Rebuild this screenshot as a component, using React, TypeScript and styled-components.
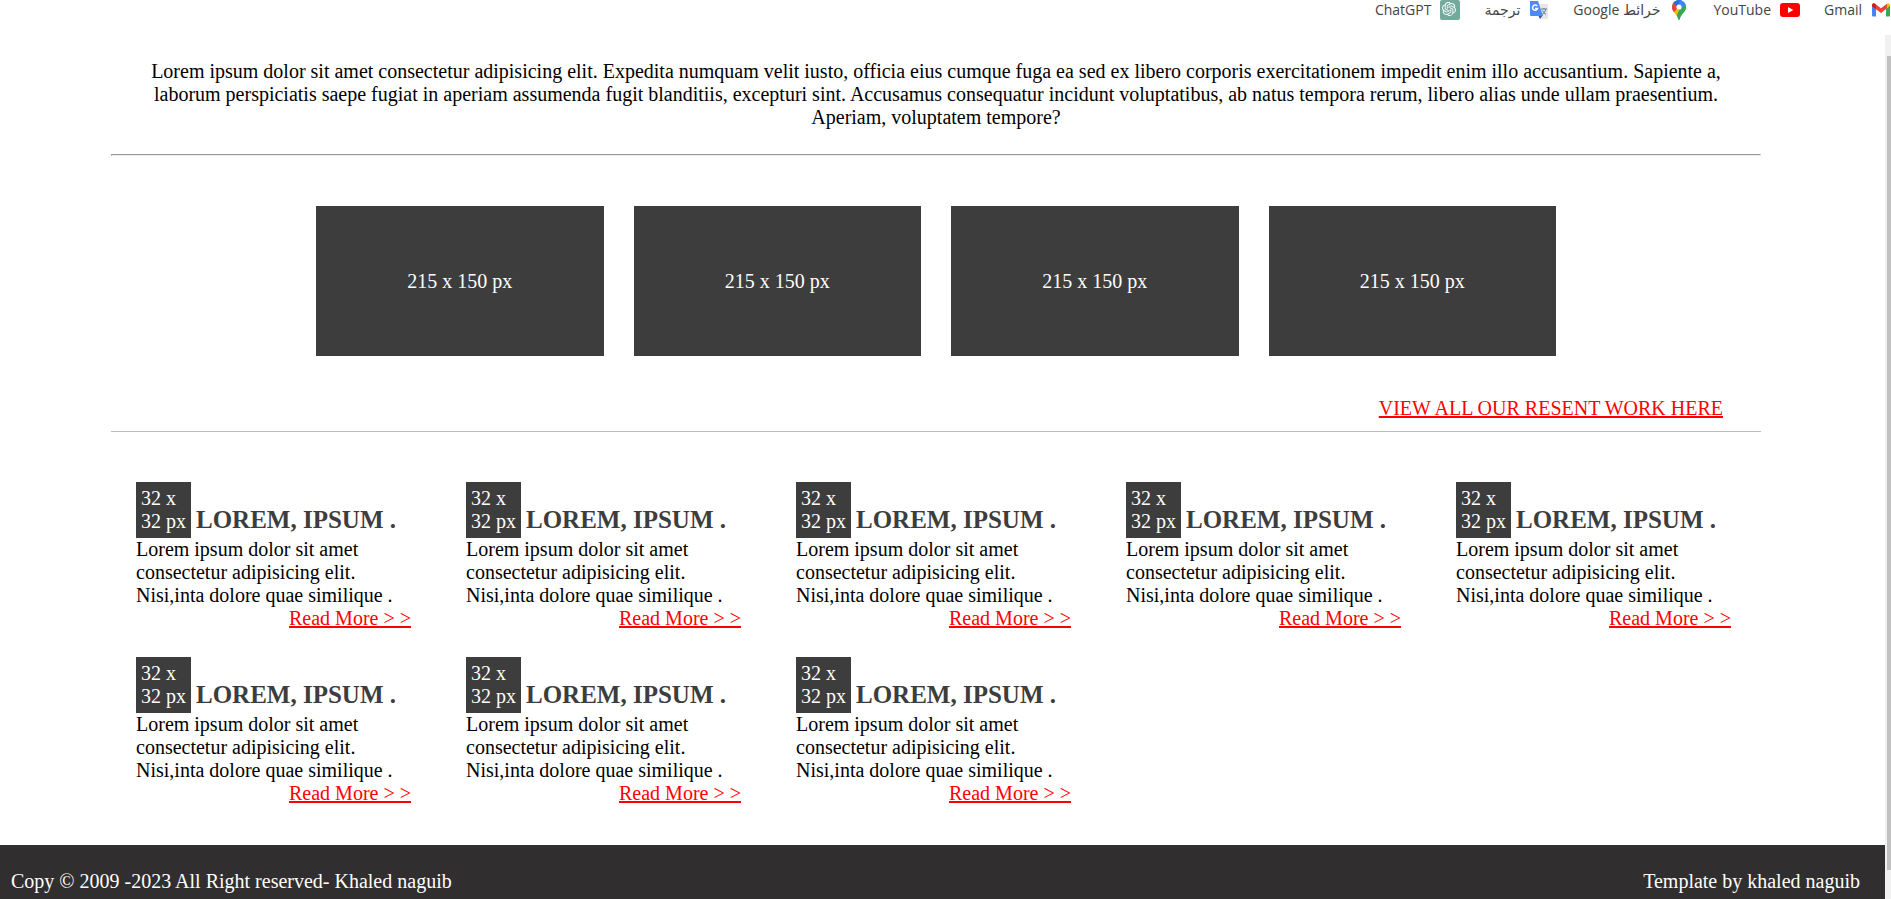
import React from 'react';
import styled, { createGlobalStyle } from 'styled-components';
import { SiOpenai } from 'react-icons/si';

const GlobalStyle = createGlobalStyle`
  *, *::before, *::after { box-sizing: border-box; }
  body {
    margin: 0;
    background: #fff;
    color: #000;
    font: 20px/23px "Liberation Serif", "Times New Roman", serif;
  }
  p, h2, ul { margin: 0; padding: 0; }
`;

const Window = styled.div`
  display: flex;
  flex-direction: column;
  height: 100vh;
  min-height: 640px;
  overflow: hidden;
`;

const BookmarkBar = styled.nav`
  display: flex;
  flex: none;
  gap: 24px;
  height: 35px;
  overflow: hidden;
`;

const Bookmark = styled.a`
  display: flex;
  align-items: center;
  gap: 9px;
  height: 20px;
  color: #444;
  font: 14px/20px "Open Sans", "DejaVu Sans", sans-serif;
  text-decoration: none;
  white-space: nowrap;

  svg { flex: none; }
`;

const Viewport = styled.div`
  display: flex;
  flex: 1;
  min-height: 0;
`;

const Page = styled.div`
  display: flex;
  flex: 1;
  flex-direction: column;
  min-width: 0;
  overflow: hidden;
`;

const ScrollTrack = styled.div`
  flex: none;
  width: 6px;
  padding: 21px 0 29px 2px;
  background: #f1f1f1;
`;

const ScrollThumb = styled.div`
  height: 100%;
  background: #c1c1c1;
`;

const Main = styled.main`
  flex: 1 0 auto;
  margin: 0 124px 0 111px;
  padding: 25px 0 40px;
`;

const Intro = styled.p`
  padding: 0 35px;
  text-align: center;
`;

const Rule = styled.hr`
  height: 2px;
  margin: 25px 0 50px;
  border: 1px solid;
  border-color: #9a9a9a #eee #eee #9a9a9a;
`;

const WorkGrid = styled.div`
  display: grid;
  grid-template-columns: repeat(4, 1fr);
  gap: 30px;
  padding: 0 205px;
`;

const WorkTile = styled.div`
  display: flex;
  align-items: center;
  justify-content: center;
  height: 150px;
  background: #3d3d3d;
  color: #fff;
`;

const WorkFooter = styled.div`
  display: flex;
  justify-content: flex-end;
  margin: 41px 0 50px;
  padding: 0 38px 11px;
  border-bottom: 1px solid #bbb;
`;

const RedLink = styled.a`
  color: #f00;
`;

const CardGrid = styled.div`
  display: grid;
  grid-template-columns: repeat(5, 1fr);
  row-gap: 27px;
`;

const Card = styled.article`
  display: flex;
  flex-direction: column;
  padding: 0 30px 0 25px;

  ${RedLink} { align-self: flex-end; }
`;

const CardHead = styled.div`
  display: flex;
  align-items: last baseline;
  gap: 5px;
`;

const CardIcon = styled.div`
  flex: none;
  width: 55px;
  padding: 5px;
  background: #3d3d3d;
  color: #fff;
`;

const CardTitle = styled.h2`
  color: #3d3d3d;
  font-size: 25px;
  line-height: 23px;
  white-space: nowrap;
`;

const Footer = styled.footer`
  display: flex;
  flex: none;
  justify-content: space-between;
  padding: 25px 25px 25px 11px;
  background: #312e2f;
  color: #fff;
`;

const GmailIcon = () => (
  <svg width="20" height="20" viewBox="0 0 20 20" aria-hidden="true">
    <path d="M1 5v10.500q0 1 1 1h3V9z" fill="#4285f4" />
    <path d="M19 5v10.500q0 1-1 1h-3V9z" fill="#34a853" />
    <path d="M15 4.500 16 3.700q1.500-.8 2.600.2.400.5.400 1.600L15 9z" fill="#fbbc04" />
    <path d="M1 5.500Q1 4 2 3.500q1-.5 2 .2L10 8.200l6-4.500V8.300L10 13 1 6.300z" fill="#ea4335" />
    <path d="M1 5.500Q1 4 2 3.500q1-.5 2 .2l1 .8V9.300L1 6.300z" fill="#c5221f" />
  </svg>
);

const YouTubeIcon = () => (
  <svg width="20" height="20" viewBox="0 0 20 20" aria-hidden="true">
    <rect x="0" y="3" width="20" height="14" rx="3" fill="#f00" />
    <path d="M8 7v6l5.300-3z" fill="#fff" />
  </svg>
);

const MapsIcon = () => (
  <svg width="20" height="20" viewBox="0 0 20 20" aria-hidden="true">
    <clipPath id="pin">
      <path d="M10 0a7 7 0 0 0-7 7c0 5 5 6.500 6.200 12 .2.900 1.400.9 1.600 0C12 13.500 17 12 17 7a7 7 0 0 0-7-7z" />
    </clipPath>
    <g clipPath="url(#pin)">
      <path d="M0 0h20v20H0z" fill="#34a853" />
      <path d="M0 13 10 7l2 3-7 8H0z" fill="#fbbc04" />
      <path d="M0 0h5l5 7-6 6H0z" fill="#ea4335" />
      <path d="M3.500 2 10-1h3l-3 8-2-1z" fill="#1a73e8" />
      <path d="M11-1 18 4l-8 7-1-4z" fill="#4285f4" />
      <path d="M18 3v17H8l1-8z" fill="#34a853" />
    </g>
    <circle cx="10" cy="7" r="2.600" fill="#fff" />
  </svg>
);

const TranslateIcon = () => (
  <svg width="20" height="20" viewBox="0 0 20 20" aria-hidden="true">
    <path d="M7 4h11q1 0 1 1v13q0 1-1 1h-7z" fill="#e4e6e9" />
    <path d="M9 15h5l-3 4z" fill="#3a4fb8" />
    <path d="M1 1h8l5 15H2q-1 0-1-1V1z" fill="#4c8bf5" />
    <path d="M8.200 6.100A2.600 2.600 0 1 0 8.600 8.500H6" fill="none" stroke="#fff" strokeWidth="1.500" />
    <path d="M12 9h6M15 8v1M17 9q-1 4-4 5.500M13.500 10.500q1 2.500 3.500 4" fill="none" stroke="#607d8b" />
  </svg>
);

const ChatIcon = () => (
  <svg width="20" height="20" viewBox="0 0 20 20" aria-hidden="true">
    <rect width="20" height="20" rx="2" fill="#74aa9c" />
    <SiOpenai x="2" y="2" width="16" height="16" color="#fff" />
  </svg>
);

const bookmarks = [
  { label: 'Gmail', Icon: GmailIcon },
  { label: 'YouTube', Icon: YouTubeIcon },
  { label: 'خرائط Google', Icon: MapsIcon },
  { label: 'ترجمة', Icon: TranslateIcon },
  { label: 'ChatGPT', Icon: ChatIcon },
];

const workTiles = [1, 2, 3, 4];
const cards = [1, 2, 3, 4, 5, 6, 7, 8];

export default function App() {
  return (
    <Window>
      <GlobalStyle />
      <BookmarkBar dir="rtl" aria-label="Bookmarks">
        {bookmarks.map(({ label, Icon }) => (
          <Bookmark href="#" key={label}>
            <Icon />
            <span>{label}</span>
          </Bookmark>
        ))}
      </BookmarkBar>
      <Viewport>
        <Page>
          <Main>
            <Intro>
              Lorem ipsum dolor sit amet consectetur adipisicing elit. Expedita numquam velit iusto,
              officia eius cumque fuga ea sed ex libero corporis exercitationem impedit enim illo
              accusantium. Sapiente a, laborum perspiciatis saepe fugiat in aperiam assumenda fugit
              blanditiis, excepturi sint. Accusamus consequatur incidunt voluptatibus, ab natus
              tempora rerum, libero alias unde ullam praesentium. Aperiam, voluptatem tempore?
            </Intro>
            <Rule />
            <WorkGrid>
              {workTiles.map((id) => (
                <WorkTile key={id}>215 x 150 px</WorkTile>
              ))}
            </WorkGrid>
            <WorkFooter>
              <RedLink href="#">VIEW ALL OUR RESENT WORK HERE</RedLink>
            </WorkFooter>
            <CardGrid>
              {cards.map((id) => (
                <Card key={id}>
                  <CardHead>
                    <CardIcon>32 x 32 px</CardIcon>
                    <CardTitle>LOREM, IPSUM .</CardTitle>
                  </CardHead>
                  <p>Lorem ipsum dolor sit amet consectetur adipisicing elit. Nisi,inta dolore quae similique .</p>
                  <RedLink href="#">Read More &gt; &gt;</RedLink>
                </Card>
              ))}
            </CardGrid>
          </Main>
          <Footer>
            <span>Copy © 2009 -2023 All Right reserved- Khaled naguib</span>
            <span>Template by khaled naguib</span>
          </Footer>
        </Page>
        <ScrollTrack>
          <ScrollThumb />
        </ScrollTrack>
      </Viewport>
    </Window>
  );
}
